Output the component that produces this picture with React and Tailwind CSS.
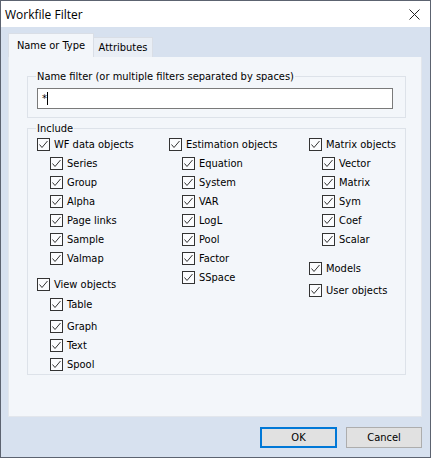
import React from 'react'

const font = { fontFamily: 'Tahoma, "DejaVu Sans Condensed", "DejaVu Sans", sans-serif' }

function Box() {
  return (
    <span className="w-[13px] h-[13px] shrink-0 border border-[#333333] bg-[#fbfcfe] flex items-center justify-center">
      <svg width="11" height="11" viewBox="0 0 11 11">
        <polyline points="1.5,5.5 4,8.5 9.5,2" fill="none" stroke="#333333" strokeWidth="1" />
      </svg>
    </span>
  )
}

function Check({ label, sub, className = '' }) {
  return (
    <div className={`h-[19px] flex items-center gap-[4px] ${sub ? 'pl-[13px]' : ''} ${className}`}>
      <Box />
      <span className="whitespace-nowrap">{label}</span>
    </div>
  )
}

export default function App() {
  return (
    <div
      className="w-[431px] h-[458px] flex flex-col border border-[#5c6370] bg-[#d7e1ef] text-[11px] text-black leading-[13px]"
      style={font}
    >
      {/* Title bar */}
      <div className="h-[26px] shrink-0 bg-white flex items-center justify-between pl-[4px] pr-[10px]">
        <span className="text-[12px]" style={{ fontFamily: '"Open Sans", "Noto Sans", sans-serif' }}>Workfile Filter</span>
        <svg width="11" height="11" viewBox="0 0 11 11">
          <path d="M0.5 0.5 L10.5 10.5 M10.5 0.5 L0.5 10.5" stroke="#222" strokeWidth="1" />
        </svg>
      </div>

      <div className="flex-1 flex flex-col pl-[7px] pr-[8px] pt-[6px]">
        {/* Tabs */}
        <div className="flex items-end h-[24px]">
          <div className="h-[24px] w-[86px] bg-[#f3f6fa] border border-b-0 border-[#d9dee6] flex items-center justify-center">
            Name or Type
          </div>
          <div className="h-[20px] w-[59px] bg-[#e9eef5] border border-l-0 border-b-0 border-[#d9dee6] flex items-center justify-center">
            Attributes
          </div>
        </div>

        {/* Panel */}
        <div className="h-[360px] bg-[#f3f6fa] border border-t-0 border-[#e2e6ec] pl-[18px] pr-[15px] pt-[13px]">
          <fieldset className="h-[48px] border border-[#dde2e9] px-[9px] pr-[12px]">
            <legend className="px-[1px] ml-[-1px]">Name filter (or multiple filters separated by spaces)</legend>
            <div className="mt-[5px] h-[21px] bg-white border border-[#7a7a7a] flex items-center pl-[4px]">
              <span>*</span>
              <span className="w-[1px] h-[13px] bg-black" />
            </div>
          </fieldset>

          <fieldset className="mt-[4px] h-[253px] border border-[#dde2e9] pl-[9px]">
            <legend className="px-[1px] ml-[-1px]">Include</legend>
            <div className="flex">
              <div className="w-[132px] flex flex-col">
                <Check label="WF data objects" />
                <Check sub label="Series" />
                <Check sub label="Group" />
                <Check sub label="Alpha" />
                <Check sub label="Page links" />
                <Check sub label="Sample" />
                <Check sub label="Valmap" />
                <Check label="View objects" className="mt-[7px]" />
                <Check sub label="Table" className="mt-[1px]" />
                <Check sub label="Graph" className="mt-[3px]" />
                <Check sub label="Text" />
                <Check sub label="Spool" />
              </div>
              <div className="w-[140px] flex flex-col">
                <Check label="Estimation objects" />
                <Check sub label="Equation" />
                <Check sub label="System" />
                <Check sub label="VAR" />
                <Check sub label="LogL" />
                <Check sub label="Pool" />
                <Check sub label="Factor" />
                <Check sub label="SSpace" />
              </div>
              <div className="flex flex-col">
                <Check label="Matrix objects" />
                <Check sub label="Vector" />
                <Check sub label="Matrix" />
                <Check sub label="Sym" />
                <Check sub label="Coef" />
                <Check sub label="Scalar" />
                <Check label="Models" className="mt-[10px]" />
                <Check label="User objects" className="mt-[3px]" />
              </div>
            </div>
          </fieldset>
        </div>

        {/* Buttons */}
        <div className="flex justify-end gap-[9px] mt-[10px] pr-[0px]">
          <button className="w-[77px] h-[21px] bg-[#e1e1e1] border-2 border-[#0078d7] flex items-center justify-center">
            OK
          </button>
          <button className="w-[76px] h-[21px] bg-[#e1e1e1] border border-[#adadad] flex items-center justify-center">
            Cancel
          </button>
        </div>
      </div>
    </div>
  )
}
